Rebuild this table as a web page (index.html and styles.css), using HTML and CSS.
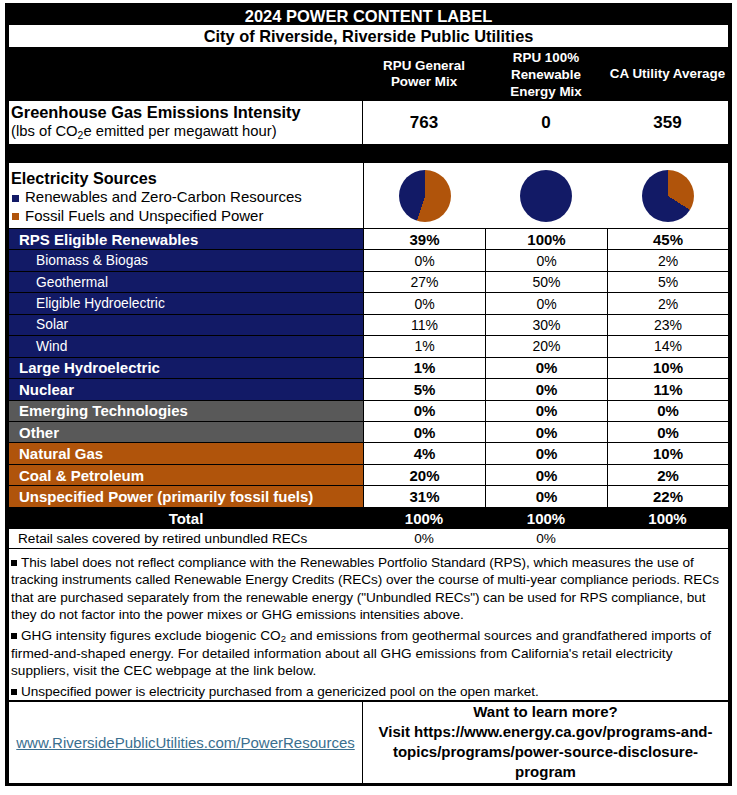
FILE: index.html
```html
<!DOCTYPE html>
<html>
<head>
<meta charset="utf-8">
<link rel="stylesheet" href="styles.css">
</head>
<body>
<div class="label">
  <div class="title">2024 POWER CONTENT LABEL</div>
  <div class="subtitle">City of Riverside, Riverside Public Utilities</div>
  <div class="grid">
    <div class="hdr"></div>
    <div class="hdr">RPU General<br>Power Mix</div>
    <div class="hdr hdr-tall">RPU 100%<br>Renewable<br>Energy Mix</div>
    <div class="hdr">CA Utility Average</div>

    <div class="ghg-label">
      <div class="ghg-title">Greenhouse Gas Emissions Intensity</div>
      <div class="ghg-sub">(lbs of CO<sub>2</sub>e emitted per megawatt hour)</div>
    </div>
    <div class="ghg-val">763</div>
    <div class="ghg-val">0</div>
    <div class="ghg-val">359</div>

    <div class="spacer"></div>

    <div class="src-label">
      <div class="src-title">Electricity Sources</div>
      <div class="legend"><span class="sq sq-navy"></span>Renewables and Zero-Carbon Resources</div>
      <div class="legend"><span class="sq sq-orange"></span>Fossil Fuels and Unspecified Power</div>
    </div>
    <div class="pie-cell first"><div class="pie" style="background: conic-gradient(#b0540b 0 55%, #121a66 55% 100%);"></div></div>
    <div class="pie-cell"><div class="pie" style="background: conic-gradient(#121a66 0 100%);"></div></div>
    <div class="pie-cell"><div class="pie" style="background: conic-gradient(#b0540b 0 34%, #121a66 34% 100%);"></div></div>

    <div class="lab navy main">RPS Eligible Renewables</div>
    <div class="val main">39%</div><div class="val main">100%</div><div class="val main">45%</div>

    <div class="lab navy sub">Biomass &amp; Biogas</div>
    <div class="val">0%</div><div class="val">0%</div><div class="val">2%</div>

    <div class="lab navy sub">Geothermal</div>
    <div class="val">27%</div><div class="val">50%</div><div class="val">5%</div>

    <div class="lab navy sub">Eligible Hydroelectric</div>
    <div class="val">0%</div><div class="val">0%</div><div class="val">2%</div>

    <div class="lab navy sub">Solar</div>
    <div class="val">11%</div><div class="val">30%</div><div class="val">23%</div>

    <div class="lab navy sub">Wind</div>
    <div class="val">1%</div><div class="val">20%</div><div class="val">14%</div>

    <div class="lab navy main">Large Hydroelectric</div>
    <div class="val main">1%</div><div class="val main">0%</div><div class="val main">10%</div>

    <div class="lab navy main">Nuclear</div>
    <div class="val main">5%</div><div class="val main">0%</div><div class="val main">11%</div>

    <div class="lab gray main">Emerging Technologies</div>
    <div class="val main">0%</div><div class="val main">0%</div><div class="val main">0%</div>

    <div class="lab gray main">Other</div>
    <div class="val main">0%</div><div class="val main">0%</div><div class="val main">0%</div>

    <div class="lab orange main">Natural Gas</div>
    <div class="val main">4%</div><div class="val main">0%</div><div class="val main">10%</div>

    <div class="lab orange main">Coal &amp; Petroleum</div>
    <div class="val main">20%</div><div class="val main">0%</div><div class="val main">2%</div>

    <div class="lab orange main">Unspecified Power (primarily fossil fuels)</div>
    <div class="val main">31%</div><div class="val main">0%</div><div class="val main">22%</div>

    <div class="total center">Total</div>
    <div class="total">100%</div><div class="total">100%</div><div class="total">100%</div>

    <div class="retail-lab">Retail sales covered by retired unbundled RECs</div>
    <div class="retail-val">0%</div><div class="retail-val">0%</div><div class="retail-val"></div>
  </div>

  <div class="notes">
    <p><span class="bullet"></span>This label does not reflect compliance with the Renewables Portfolio Standard (RPS), which measures the use of tracking instruments called Renewable Energy Credits (RECs) over the course of multi-year compliance periods. RECs that are purchased separately from the renewable energy ("Unbundled RECs") can be used for RPS compliance, but they do not factor into the power mixes or GHG emissions intensities above.</p>
    <p class="wide"><span class="bullet"></span>GHG intensity figures exclude biogenic CO<sub class="nsub">2</sub> and emissions from geothermal sources and grandfathered imports of firmed-and-shaped energy. For detailed information about all GHG emissions from California's retail electricity suppliers, visit the CEC webpage at the link below.</p>
    <p><span class="bullet"></span>Unspecified power is electricity purchased from a genericized pool on the open market.</p>
  </div>

  <div class="footer">
    <div class="foot-left"><a class="link" href="#">www.RiversidePublicUtilities.com/PowerResources</a></div>
    <div class="foot-right">Want to learn more?<br>Visit https://www.energy.ca.gov/programs-and-<br>topics/programs/power-source-disclosure-<br>program</div>
  </div>
</div>
</body>
</html>
```

FILE: styles.css
```css
body {
  margin: 0;
  padding: 3px 0 0 5px;
  background: #fff;
  font-family: "Liberation Sans", Arial, sans-serif;
  color: #000;
}

.label {
  width: 727px;
  box-sizing: border-box;
  border: 4px solid #000;
  border-bottom-width: 3px;
}

.title {
  background: #000;
  color: #fff;
  font-weight: bold;
  font-size: 16.5px;
  height: 18px;
  line-height: 18px;
  text-align: center;
}

.subtitle {
  background: #fff;
  font-weight: bold;
  font-size: 16.4px;
  height: 22px;
  line-height: 22px;
  text-align: center;
}

.grid {
  display: grid;
  grid-template-columns: 354px 122px 122px 121px;
}

.hdr {
  background: #000;
  color: #fff;
  font-weight: bold;
  font-size: 13.4px;
  line-height: 16px;
  height: 54px;
  display: flex;
  align-items: center;
  justify-content: center;
  text-align: center;
  white-space: nowrap;
}

.hdr-tall {
  line-height: 17px;
}

.ghg-label {
  height: 43px;
  box-sizing: border-box;
  border-right: 1px solid #000;
  padding: 1px 0 0 2px;
}

.ghg-title {
  font-weight: bold;
  font-size: 16.4px;
  line-height: 20px;
}

.ghg-sub {
  font-size: 14.8px;
  line-height: 19px;
}

sub {
  font-size: 70%;
  line-height: 0;
  vertical-align: -3px;
}

.nsub {
  vertical-align: -2px;
}

.ghg-val {
  height: 43px;
  display: flex;
  align-items: center;
  justify-content: center;
  font-weight: bold;
  font-size: 17px;
}

.spacer {
  grid-column: 1 / -1;
  height: 19px;
  background: #000;
}

.src-label {
  height: 66px;
  box-sizing: border-box;
  padding: 6px 0 0 2px;
  border-bottom: 1px solid #000;
}

.src-title {
  font-weight: bold;
  font-size: 16.2px;
  line-height: 19px;
}

.legend {
  font-size: 15px;
  line-height: 18.5px;
  display: flex;
  align-items: center;
}

.sq {
  display: inline-block;
  width: 7px;
  height: 7px;
  margin: 2px 6px 0 1px;
}

.sq-navy { background: #121a66; }
.sq-orange { background: #b0540b; }

.pie-cell {
  height: 66px;
  box-sizing: border-box;
  border-bottom: 1px solid #000;
  display: flex;
  align-items: center;
  justify-content: center;
}

.pie-cell.first {
  border-left: 1px solid #000;
}

.pie {
  width: 52px;
  height: 52px;
  border-radius: 50%;
  filter: blur(0.4px);
}

.lab {
  height: 21.45px;
  box-sizing: border-box;
  border-bottom: 1px solid #000;
  color: #fff;
  display: flex;
  align-items: center;
  white-space: nowrap;
}

.lab.main {
  font-weight: bold;
  font-size: 15px;
  padding-left: 10px;
}

.lab.sub {
  font-size: 13.8px;
  padding-left: 27px;
}

.navy { background: #121a66; }
.gray { background: #595959; }
.orange { background: #b0540b; }

.val {
  height: 21.45px;
  box-sizing: border-box;
  border-bottom: 1px solid #000;
  border-left: 1px solid #000;
  display: flex;
  align-items: center;
  justify-content: center;
  font-size: 14px;
}

.val.main {
  font-weight: bold;
  font-size: 15px;
}

.total {
  height: 21px;
  background: #000;
  color: #fff;
  font-weight: bold;
  font-size: 15px;
  display: flex;
  align-items: center;
  justify-content: center;
}

.retail-lab {
  height: 20px;
  box-sizing: border-box;
  border-bottom: 1px solid #000;
  font-size: 13.6px;
  padding-left: 9px;
  display: flex;
  align-items: center;
  white-space: nowrap;
}

.retail-val {
  height: 20px;
  box-sizing: border-box;
  border-bottom: 1px solid #000;
  font-size: 13.6px;
  display: flex;
  align-items: center;
  justify-content: center;
}

.notes {
  padding: 5px 0 2px 2px;
  height: 151px;
  box-sizing: border-box;
}

.notes p {
  margin: 0 0 3px;
  font-size: 13.6px;
  line-height: 17.6px;
  letter-spacing: -0.06px;
}

.notes p.wide {
  letter-spacing: 0.03px;
}

.bullet {
  display: inline-block;
  width: 6px;
  height: 6px;
  background: #000;
  margin: 0 4px 1px 0;
}

.footer {
  display: grid;
  grid-template-columns: 354px 365px;
  border-top: 2px solid #000;
  height: 83px;
  box-sizing: border-box;
}

.foot-left {
  display: flex;
  align-items: center;
  justify-content: center;
  border-right: 1px solid #000;
}

.link {
  color: #3a6f8f;
  font-size: 15px;
  text-decoration: underline;
  white-space: nowrap;
}

.foot-right {
  display: flex;
  align-items: center;
  justify-content: center;
  text-align: center;
  font-weight: bold;
  font-size: 15px;
  line-height: 20px;
  white-space: nowrap;
}
```
